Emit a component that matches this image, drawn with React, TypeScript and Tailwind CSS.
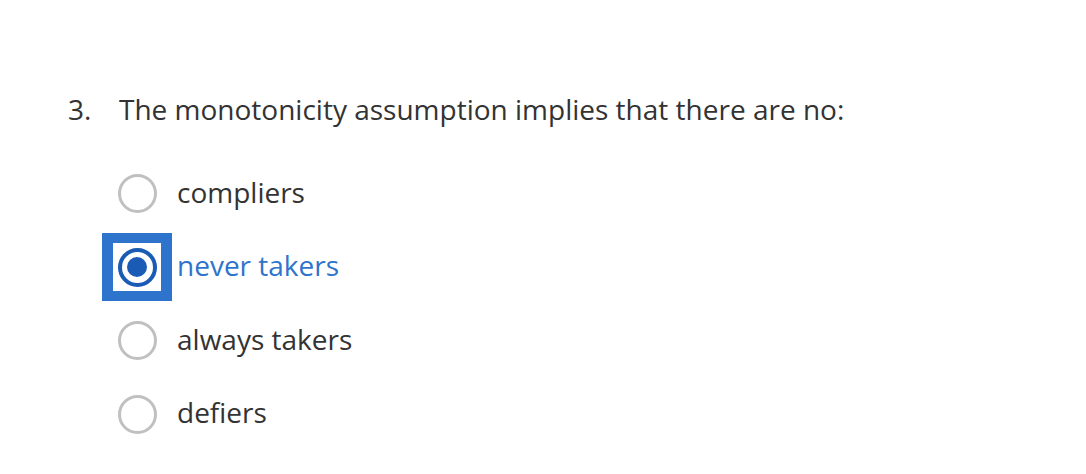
import { useState } from 'react';

const options = ['compliers', 'never takers', 'always takers', 'defiers'];

export default function App() {
  const [selected, setSelected] = useState(1);

  return (
    <div
      className="w-[1086px] h-[474px] bg-white text-[#333333]"
      style={{ fontFamily: '"Open Sans", sans-serif' }}
    >
      <div className="pt-[88px] pl-[68px]">
        <div className="flex text-[28px] leading-[42px]">
          <span className="w-[51px]">3.</span>
          <span>The monotonicity assumption implies that there are no:</span>
        </div>

        <div className="mt-[27px] pl-[34px] flex flex-col">
          {options.map((opt, i) => {
            const active = i === selected;
            return (
              <label
                key={opt}
                onClick={() => setSelected(i)}
                className="flex items-center h-[73.5px] cursor-pointer"
              >
                <span
                  className={`w-[70px] h-[68px] flex items-center justify-center ${
                    active ? 'bg-[#2f74cc]' : ''
                  }`}
                >
                  <span
                    className={`w-[48px] h-[48px] flex items-center justify-center ${
                      active ? 'bg-white' : ''
                    }`}
                  >
                    {active ? (
                      <span className="w-[39px] h-[39px] rounded-full border-[4px] border-[#1a5cb5] flex items-center justify-center">
                        <span className="w-[20px] h-[20px] rounded-full bg-[#1a5cb5]" />
                      </span>
                    ) : (
                      <span className="w-[39px] h-[39px] rounded-full border-[3px] border-[#c0c0c0]" />
                    )}
                  </span>
                </span>
                <span
                  className={`ml-[5px] relative -top-[2px] text-[28px] leading-[42px] ${
                    active ? 'text-[#2f74cc]' : 'text-[#333333]'
                  }`}
                >
                  {opt}
                </span>
              </label>
            );
          })}
        </div>
      </div>
    </div>
  );
}
